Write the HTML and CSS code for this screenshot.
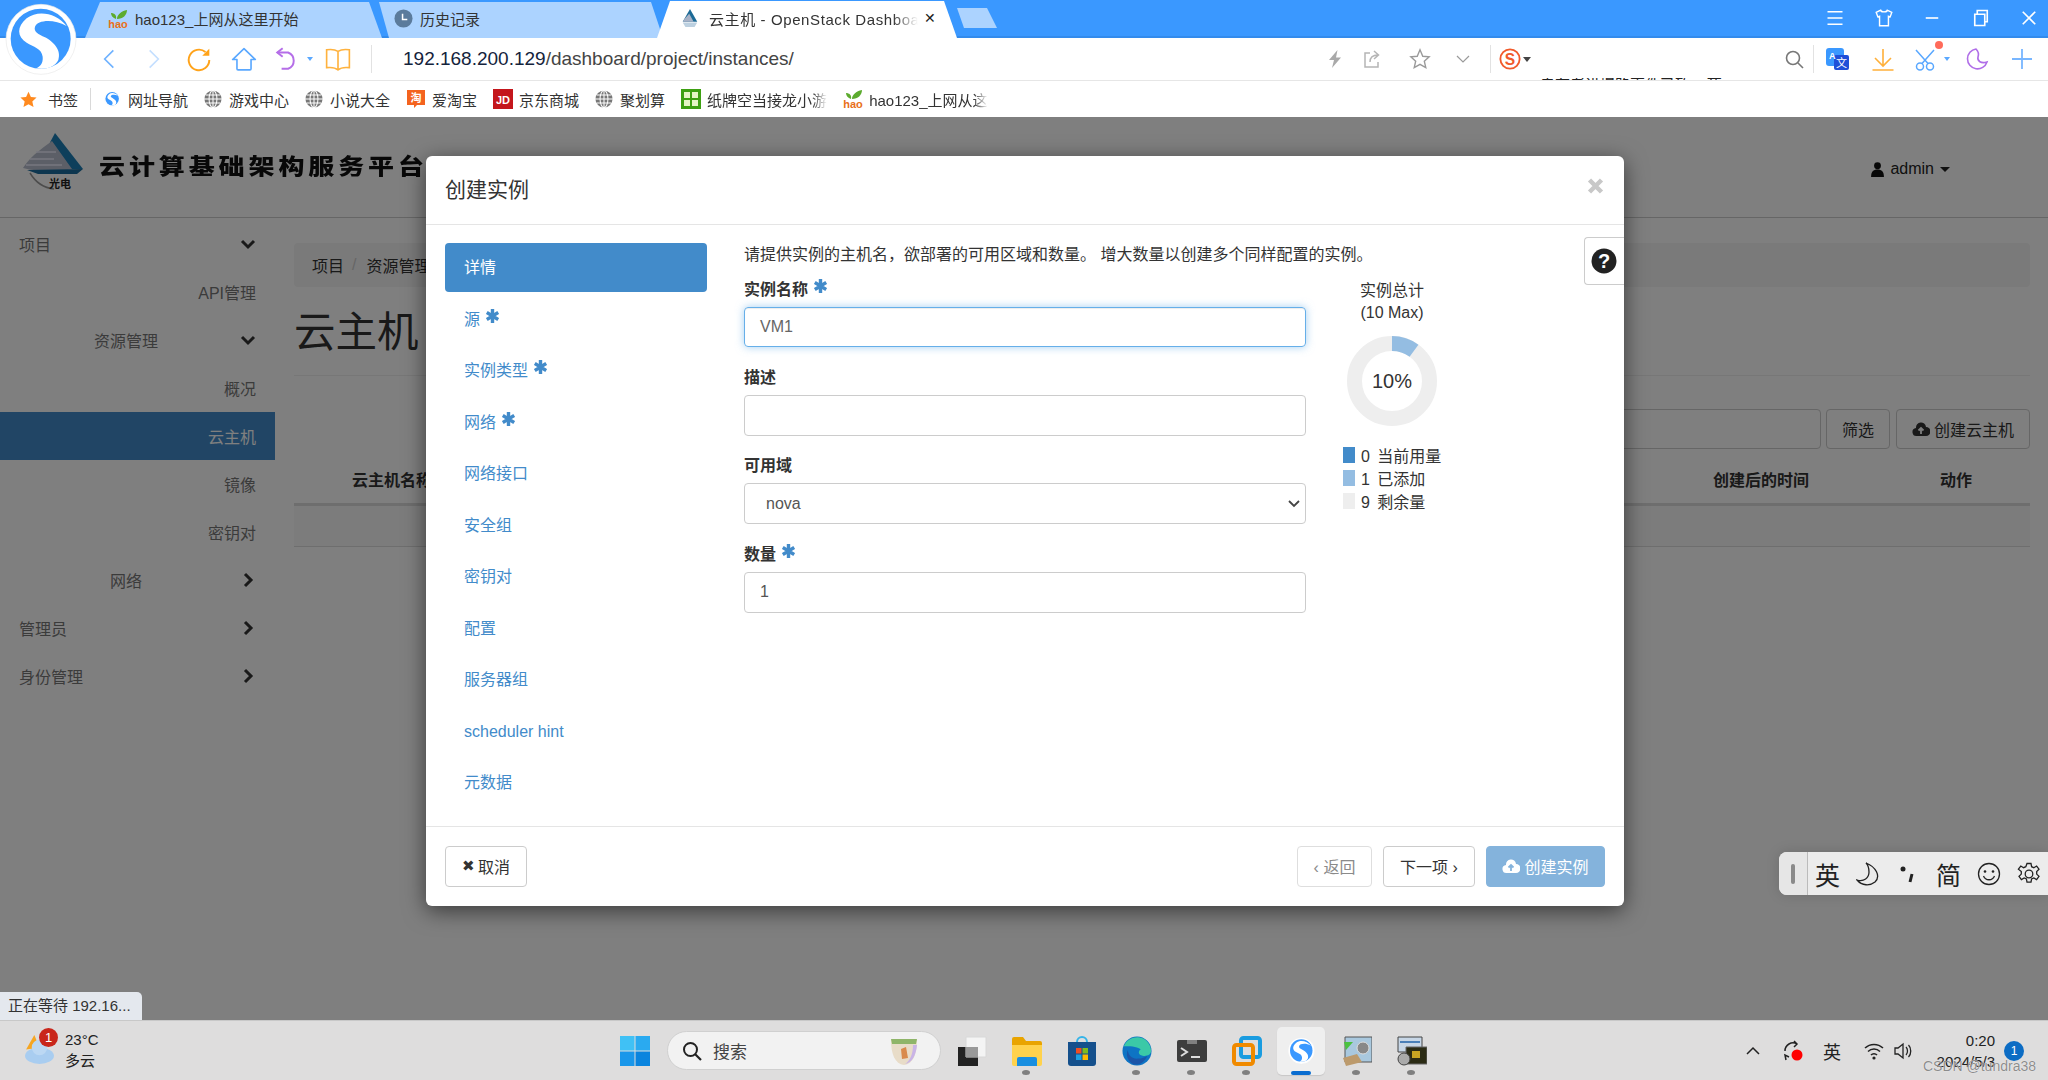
FILE: index.html
```html
<!DOCTYPE html>
<html lang="zh-CN">
<head>
<meta charset="utf-8">
<title>云主机 - OpenStack Dashboard</title>
<link rel="stylesheet" href="styles.css">
</head>
<body>
<svg class="defs" viewBox="0 0 16 16">
  <defs>
    <symbol id="globe" viewBox="0 0 16 16"><circle cx="8" cy="8" r="7.6" fill="#777"/><path d="M0 8h16M1.5 4.5h13M1.5 11.5h13M8 0v16" stroke="#fff" stroke-width=".9"/><ellipse cx="8" cy="8" rx="3.5" ry="7.6" fill="none" stroke="#fff" stroke-width=".9"/></symbol>
    <symbol id="s-logo" viewBox="0 0 240 240"><circle cx="123" cy="118" r="105" fill="#fff" stroke="#e9e9e9" stroke-width="2"/><circle cx="122" cy="116" r="90" fill="#3a98ff"/><path d="M200 78C170 40 115 28 80 55 50 80 50 110 80 128c20 12 45 17 48 42 2 20-8 30-20 35 32 5 57-5 67-25 10-30-15-55-40-68-20-10-35-17-30-32 7-20 55-25 95-2z" fill="#fff"/></symbol>
    <symbol id="hao" viewBox="0 0 20 18"><path d="M8 9C5 8 3 6 3 3 6 3 9 5 8 9zM9 9c0-4 4-8 10-9 0 5-4 9-10 9z" fill="#5cab2e"/><text x="10" y="17.500" class="hao">hao</text></symbol>
    <symbol id="asterisk" viewBox="0 0 13 14"><path d="M6.500 0v14M.8 3.500l11.400 7M12.200 3.500L.8 10.500" stroke="#428bca" stroke-width="3.400"/></symbol>
    <symbol id="cloud" viewBox="0 0 18 16"><path d="M5 15a4 4 0 0 1-1-8 5 5 0 0 1 10-1 4.500 4.500 0 0 1 0 9z" fill="currentColor"/></symbol>
  </defs>
</svg>
<div class="screen">
  <header class="tabbar">
    <div class="tab tab-a"><svg class="fav"><use href="#hao"/></svg><span>hao123_上网从这里开始</span></div>
    <div class="tab tab-b"><svg class="fav" viewBox="0 0 20 20"><circle cx="10" cy="10" r="9.500" fill="#5b7b9c"/><path d="M9 5v6h5" stroke="#fff" stroke-width="1.600" fill="none"/></svg><span>历史记录</span></div>
    <div class="tab tab-c"><svg class="fav" viewBox="0 0 22 22"><path d="M11 1l8 14H3z" fill="#1c6a96"/><path d="M3 15c4-6 6-7 7-9l5 9z" fill="#a8b2c6"/><path d="M3 16h16l-3 5H6z" fill="#bcd0e0"/></svg><span class="tab-title">云主机 - OpenStack Dashboard</span><span class="tab-x">✕</span></div>
    <div class="tab-new"></div>
    <div class="winbtns">
      <svg viewBox="0 0 16 16"><path d="M2 3h12M2 8h12M2 13h12" stroke="#fff" stroke-width="1.300"/></svg>
      <svg viewBox="0 0 18 18"><path d="M6 2L2 4l1.500 4L5 7.500V16h8V7.500l1.500.5L16 4l-4-2c-.5 2-5.500 2-6 0z" fill="none" stroke="#fff" stroke-width="1.300"/></svg>
      <svg viewBox="0 0 16 16"><path d="M3 8h10" stroke="#fff" stroke-width="1.300"/></svg>
      <svg viewBox="0 0 16 16"><path d="M3 5h8v9H3zM5 5V2h8v9h-2" fill="none" stroke="#fff" stroke-width="1.300"/></svg>
      <svg viewBox="0 0 16 16"><path d="M3 3l10 10M13 3L3 13" stroke="#fff" stroke-width="1.300"/></svg>
    </div>
  </header>

  <div class="logo-s"><svg><use href="#s-logo"/></svg></div>

  <nav class="toolbar">
    <div class="tool-left">
      <svg class="ic" viewBox="0 0 24 24"><path d="M16 4L8 12l8 8" fill="none" stroke="#6fb2ff" stroke-width="1.500"/></svg>
      <svg class="ic" viewBox="0 0 24 24"><path d="M8 4l8 8-8 8" fill="none" stroke="#c4dfff" stroke-width="1.500"/></svg>
      <svg class="ic" viewBox="0 0 24 24"><path d="M18 5.500A9.500 9.500 0 1 0 21.500 13" fill="none" stroke="#ffa31a" stroke-width="1.800"/><path d="M21.500 2.500v6.500H15z" fill="#ffa31a"/></svg>
      <svg class="ic" viewBox="0 0 24 24"><path d="M12 2.500L1.500 12.500H5.500V21a1 1 0 0 0 1 1h11a1 1 0 0 0 1-1v-8.500h4z" fill="none" stroke="#5aa8ff" stroke-width="1.500" stroke-linejoin="round"/></svg>
      <svg class="ic undo" viewBox="0 0 24 24"><path d="M8 2L3 6l5 4" fill="none" stroke="#b56ee8" stroke-width="1.800"/><path d="M3 6h10a8 8 0 0 1 0 15H7" fill="none" stroke="#b56ee8" stroke-width="1.800"/></svg>
      <i class="drop drop-blue"></i>
      <svg class="ic book" viewBox="0 0 24 24"><path d="M12 5C9 3 5 3 1.500 3.500V20c4-.5 7.500-.5 10.500 2 3-2.500 6.500-2.500 10.500-2V3.500C19 3 15 3 12 5zm0 0v17" fill="none" stroke="#ffb23e" stroke-width="1.500"/></svg>
    </div>
    <div class="address"><span class="host">192.168.200.129</span><span class="path">/dashboard/project/instances/</span></div>
    <div class="tool-mid">
      <svg class="m-bolt" viewBox="0 0 20 20"><path d="M12.500 1L4 11h5l-2 8 9-10.500h-5z" fill="#a9a9a9"/></svg>
      <svg class="m-share" viewBox="0 0 20 20"><path d="M8 4H3v14h13v-5M8 13c0-5 3-7 8-7M12 2l4.500 4L12 10" fill="none" stroke="#b5b5b5" stroke-width="1.500"/></svg>
      <svg class="m-star" viewBox="0 0 24 24"><path d="M12 2l3 7 7 .6-5.300 4.800 1.600 7.100L12 17.800 5.700 21.500l1.600-7.100L2 9.600 9 9z" fill="none" stroke="#9a9a9a" stroke-width="1.500"/></svg>
      <svg class="m-chev" viewBox="0 0 16 16"><path d="M2 5l6 6 6-6" fill="none" stroke="#9a9a9a" stroke-width="1.200"/></svg>
      <i class="vsep m-sep"></i>
      <svg class="m-s" viewBox="0 0 24 24"><circle cx="12" cy="12" r="10.500" fill="none" stroke="#f15a2b" stroke-width="2"/><text x="12" y="18" class="s-mark">S</text></svg>
      <i class="drop drop-dark"></i>
    </div>
    <div class="news"><span>幸存者讲爆路事件已致48死</span></div>
    <div class="tool-right">
      <svg class="r-search" viewBox="0 0 22 22"><circle cx="10" cy="10" r="6.500" fill="none" stroke="#777" stroke-width="1.600"/><path d="M15 15l5 5" stroke="#777" stroke-width="1.600"/></svg>
      <i class="vsep r-sep"></i>
      <svg class="r-trans" viewBox="0 0 24 22"><rect x="1" y="0" width="18" height="18" rx="3" fill="#3a98ff"/><rect x="9" y="7" width="15" height="15" rx="2" fill="#1f4fd8"/><text x="4" y="11" class="t-a">A</text><text x="11" y="19" class="t-x">文</text></svg>
      <svg class="r-dl" viewBox="0 0 24 24"><path d="M12 2v17M4 11l8 8 8-8M1.500 23h21" fill="none" stroke="#ffb03a" stroke-width="1.600"/></svg>
      <div class="scissor">
        <svg class="r-sc" viewBox="0 0 24 24"><circle cx="7" cy="19.500" r="3.500" fill="none" stroke="#5aa8ff" stroke-width="1.500"/><circle cx="17" cy="19.500" r="3.500" fill="none" stroke="#5aa8ff" stroke-width="1.500"/><path d="M9 16.500L21 3M15 16.500L3 3" stroke="#5aa8ff" stroke-width="1.500"/></svg>
        <b class="reddot"></b>
      </div>
      <i class="drop drop-blue r-drop"></i>
      <svg class="r-moon" viewBox="0 0 24 24"><path d="M11 2a10 10 0 1 0 11 13c-6 2-10-1-9-5 1-3 0-6-2-8z" fill="none" stroke="#b06ee8" stroke-width="1.600"/></svg>
      <svg class="r-plus" viewBox="0 0 24 24"><path d="M12 2v20M2 12h20" stroke="#78b6ff" stroke-width="1.800"/></svg>
    </div>
  </nav>

  <div class="bookmarks">
    <svg class="bm-star" viewBox="0 0 24 24"><path d="M12 1l3.400 7.400 8 .9-6 5.400 1.700 8L12 18.700 4.900 22.700l1.700-8-6-5.400 8-.9z" fill="#ff8a1f"/></svg>
    <span class="bm-label">书签</span>
    <i class="bm-sep"></i>
    <span class="bm"><svg><use href="#s-logo"/></svg>网址导航</span>
    <span class="bm"><svg><use href="#globe"/></svg>游戏中心</span>
    <span class="bm"><svg><use href="#globe"/></svg>小说大全</span>
    <span class="bm"><svg class="sq" viewBox="0 0 20 20"><path d="M1 1h18v15h-8l-3 3v-3H1z" fill="#f4631e"/><text x="10" y="13" class="bm-ic">淘</text></svg>爱淘宝</span>
    <span class="bm"><svg class="sq" viewBox="0 0 20 20"><path d="M0 0h20v20H0z" fill="#c4161c"/><text x="10" y="15" class="bm-ic">JD</text></svg>京东商城</span>
    <span class="bm"><svg><use href="#globe"/></svg>聚划算</span>
    <span class="bm"><svg class="sq" viewBox="0 0 20 20"><path d="M0 0h20v20H0z" fill="#3da012"/><path d="M3 3h6v6H3zM11 3h6v6h-6zM3 11h6v6H3zM11 11h6v6h-6z" fill="#e4f5c4"/></svg><span class="fade">纸牌空当接龙小游</span></span>
    <span class="bm"><svg class="sq"><use href="#hao"/></svg><span class="fade">hao123_上网从这</span></span>
  </div>

  <main class="page">
    <div class="top-header">
      <div class="brand">
        <svg class="brand-logo" viewBox="0 0 62 58"><path d="M33 1l28 36H14z" fill="#1c7fb6"/><path d="M1 36C10 22 24 14 30 9l20 28C36 40 16 40 1 36z" fill="#b9bfcf"/><path d="M8 27h24M14 20h20M4 33h36" stroke="#eef" stroke-width="1.500"/><path d="M5 38l56-1-6 5H16z" fill="#1a6d9e"/><path d="M8 41c6 10 14 15 24 16" fill="none" stroke="#999" stroke-width="1.500"/><text x="27" y="56" class="brand-sm">光电</text></svg>
        <span class="brand-name">云计算基础架构服务平台</span>
      </div>
      <div class="user"><svg class="user-ic" viewBox="0 0 12 14"><circle cx="6" cy="3.500" r="3.200"/><path d="M0 14c0-5 2-7 6-7s6 2 6 7z"/></svg>admin<i class="caret"></i></div>
    </div>
    <div class="body-row">
      <aside class="sidebar">
        <div class="s-item lv0"><span>项目</span><svg class="chev" viewBox="0 0 16 16"><path d="M2 5l6 6 6-6" fill="none" stroke="currentColor" stroke-width="3"/></svg></div>
        <div class="s-item leaf">API管理</div>
        <div class="s-item lv1"><span>资源管理</span><svg class="chev" viewBox="0 0 16 16"><path d="M2 5l6 6 6-6" fill="none" stroke="currentColor" stroke-width="3"/></svg></div>
        <div class="s-item leaf">概况</div>
        <div class="s-item leaf active">云主机</div>
        <div class="s-item leaf">镜像</div>
        <div class="s-item leaf">密钥对</div>
        <div class="s-item lv1b"><span>网络</span><svg class="chev" viewBox="0 0 16 16"><path d="M5 2l6 6-6 6" fill="none" stroke="currentColor" stroke-width="3"/></svg></div>
        <div class="s-item lv0"><span>管理员</span><svg class="chev" viewBox="0 0 16 16"><path d="M5 2l6 6-6 6" fill="none" stroke="currentColor" stroke-width="3"/></svg></div>
        <div class="s-item lv0"><span>身份管理</span><svg class="chev" viewBox="0 0 16 16"><path d="M5 2l6 6-6 6" fill="none" stroke="currentColor" stroke-width="3"/></svg></div>
      </aside>
      <section class="content">
        <div class="crumb">项目<span class="crumb-sep">/</span>资源管理</div>
        <h1 class="h1">云主机</h1>
        <div class="filter-row">
          <div class="filter-input"></div>
          <div class="btn-bg">筛选</div>
          <div class="btn-bg"><svg class="cloud"><use href="#cloud"/><path d="M9 13V7M6.500 9.500L9 7l2.500 2.500" stroke="#fff" stroke-width="1.800" fill="none"/></svg>创建云主机</div>
        </div>
        <div class="thead">
          <span class="th th-name">云主机名称</span>
          <span class="th th-time">创建后的时间</span>
          <span class="th th-act">动作</span>
        </div>
        <div class="trow"></div>
      </section>
    </div>

    <div class="backdrop"></div>

    <div class="modal">
      <div class="modal-head"><span class="modal-title">创建实例</span><svg class="modal-x" viewBox="0 0 17 16"><path d="M2.500 2l12 12M14.500 2l-12 12" stroke="#c8c8c8" stroke-width="4.500"/></svg></div>
      <div class="modal-body">
        <ul class="steps">
          <li class="step on">详情</li>
          <li class="step">源<svg class="req"><use href="#asterisk"/></svg></li>
          <li class="step">实例类型<svg class="req"><use href="#asterisk"/></svg></li>
          <li class="step">网络<svg class="req"><use href="#asterisk"/></svg></li>
          <li class="step">网络接口</li>
          <li class="step">安全组</li>
          <li class="step">密钥对</li>
          <li class="step">配置</li>
          <li class="step">服务器组</li>
          <li class="step">scheduler hint</li>
          <li class="step">元数据</li>
        </ul>
        <div class="pane">
          <p class="hint">请提供实例的主机名，欲部署的可用区域和数量。 增大数量以创建多个同样配置的实例。</p>
          <div class="pane-row">
            <form class="fields">
              <div class="field"><label class="lbl">实例名称<svg class="req"><use href="#asterisk"/></svg></label><div class="inp focus">VM1</div></div>
              <div class="field"><label class="lbl">描述</label><div class="inp"></div></div>
              <div class="field"><label class="lbl">可用域</label><div class="inp sel">nova<svg class="sel-ar" viewBox="0 0 12 8"><path d="M1 1l5 5 5-5" fill="none" stroke="#444" stroke-width="1.800"/></svg></div></div>
              <div class="field"><label class="lbl">数量<svg class="req"><use href="#asterisk"/></svg></label><div class="inp">1</div></div>
            </form>
            <div class="quota">
              <div class="q-title">实例总计<br>(10 Max)</div>
              <div class="donut"><svg viewBox="0 0 90 90"><circle cx="45" cy="45" r="37.500" fill="none" stroke="#eee" stroke-width="15"/><path d="M45 7.500A37.500 37.500 0 0 1 67 14.700" fill="none" stroke="#94bde2" stroke-width="15"/></svg><span class="pct">10%</span></div>
              <ul class="legend">
                <li><i class="sw sw1"></i>0 当前用量</li>
                <li><i class="sw sw2"></i>1 已添加</li>
                <li><i class="sw sw3"></i>9 剩余量</li>
              </ul>
            </div>
          </div>
        </div>
        <div class="help"><svg viewBox="0 0 26 26"><circle cx="13" cy="13" r="12.500" fill="#222"/><text x="13" y="20" class="help-q">?</text></svg></div>
      </div>
      <div class="modal-foot">
        <button class="mbtn cancel"><span class="xm">✖</span>取消</button>
        <div class="foot-right">
          <button class="mbtn back">‹ 返回</button>
          <button class="mbtn next">下一项 ›</button>
          <button class="mbtn go"><svg class="cloud"><use href="#cloud"/><path d="M9 13V7M6.500 9.500L9 7l2.500 2.500" stroke="#84b3dc" stroke-width="1.800" fill="none"/></svg>创建实例</button>
        </div>
      </div>
    </div>

    <div class="ime">
      <span class="ime-grip"><i></i></span>
      <span class="ime-t">英</span>
      <svg viewBox="0 0 24 24"><path d="M10 1C20 5 25 14 19 20 14 24 6 24 1 18c7 2 12-2 12-8 0-4-1-7-3-9z" fill="none" stroke="#222" stroke-width="1.300"/></svg>
      <svg viewBox="0 0 24 24"><circle cx="7" cy="7" r="2.500" fill="#222"/><path d="M16 12l-2 8" stroke="#222" stroke-width="3"/></svg>
      <span class="ime-t">简</span>
      <svg viewBox="0 0 24 24"><circle cx="12" cy="12" r="10.500" fill="none" stroke="#222" stroke-width="1.300"/><circle cx="8" cy="9.500" r="1.300" fill="#222"/><circle cx="16" cy="9.500" r="1.300" fill="#222"/><path d="M6.500 14c2 5 9 5 11 0" fill="none" stroke="#222" stroke-width="1.300"/></svg>
      <svg viewBox="0 0 24 24"><circle cx="12" cy="12" r="3.800" fill="none" stroke="#222" stroke-width="1.300"/><path d="M10 1.500h4l.6 3.200 2.200 1 2.800-1.700 2.400 3.200-2.300 2.300v2.600l2.300 2.300-2.400 3.200-2.800-1.700-2.200 1-.6 3.300h-4l-.6-3.300-2.200-1-2.800 1.700-2.400-3.200 2.300-2.300v-2.600L1.400 7.200l2.400-3.200 2.800 1.700 2.200-1z" fill="none" stroke="#222" stroke-width="1.300"/></svg>
    </div>
    <div class="status">正在等待 192.16...</div>
  </main>

  <footer class="taskbar">
    <div class="weather">
      <svg class="w-ic" viewBox="0 0 30 30"><path d="M2 16l8-14 5 12z" fill="#f5a623"/><ellipse cx="15" cy="22" rx="14" ry="8" fill="#a9cdf0"/><circle cx="15" cy="14" r="7.500" fill="#bcd8f3"/></svg>
      <b class="w-badge">1</b>
      <div class="w-text"><span>23°C</span><span>多云</span></div>
    </div>
    <div class="dock">
      <svg class="tb" viewBox="0 0 30 30"><path d="M0 0h14.500v14.500H0z" fill="#40c1f5"/><path d="M15.500 0H30v14.500H15.500z" fill="#2aaaf0"/><path d="M0 15.500h14.500V30H0z" fill="#1a97ea"/><path d="M15.500 15.500H30V30H15.500z" fill="#0a84de"/></svg>
      <div class="searchbox"><svg viewBox="0 0 20 20"><circle cx="8.500" cy="8.500" r="6.500" fill="none" stroke="#222" stroke-width="2"/><path d="M13 13l6 6" stroke="#222" stroke-width="2.200"/></svg><span>搜索</span><svg class="cup" viewBox="0 0 30 28"><path d="M2 3h26c0 14-4 24-13 25C6 27 2 17 2 3z" fill="#e8dcc8"/><path d="M2 2h26l-1 5H3z" fill="#8fb569"/><path d="M12 12l5-2 2 11-6 1z" fill="#d98a4c"/><path d="M24 8c0 9-3 16-8 19 7-1 11-9 12-19z" fill="#c9b4e6"/></svg></div>
      <div class="app"><svg class="tb" viewBox="0 0 30 30"><path d="M1 11h20v19H1z" fill="#222"/><path d="M9 1h20v20H9z" fill="#f4f4f4" stroke="#d8d8d8"/><path d="M9 11h12v10H9z" fill="#999"/></svg></div>
      <div class="app"><svg class="tb" viewBox="0 0 30 30"><path d="M0 3a2 2 0 0 1 2-2h9l3 4h14a2 2 0 0 1 2 2v21H0z" fill="#e9a400"/><path d="M0 9h30v19a2 2 0 0 1-2 2H2a2 2 0 0 1-2-2z" fill="#ffd24c"/><path d="M5 23a2 2 0 0 1 2-2h16a2 2 0 0 1 2 2v7H5z" fill="#1a8fe0"/></svg><i class="dot"></i></div>
      <div class="app"><svg class="tb" viewBox="0 0 30 30"><path d="M10 6a5 5 0 0 1 10 0" fill="none" stroke="#35b4e8" stroke-width="2"/><path d="M1 6h28v21a3 3 0 0 1-3 3H4a3 3 0 0 1-3-3z" fill="#15508c"/><path d="M9 12h5.500v5.500H9z" fill="#ef4e23"/><path d="M15.500 12H21v5.500h-5.500z" fill="#7fbb1f"/><path d="M9 18.500h5.500V24H9z" fill="#1ba1e2"/><path d="M15.500 18.500H21V24h-5.500z" fill="#ffb900"/></svg></div>
      <div class="app"><svg class="tb" viewBox="0 0 32 32"><circle cx="16" cy="16" r="15.500" fill="#0e74c4"/><path d="M2 11C5 3 14 0 21 2c6 2 10 8 10 14 0 4-5 6-9 5-5-1-5-5-2-7-5-3-12-3-18-3z" fill="#3bc9a7"/><path d="M12 30c-6-3-8-9-6-15 1 6 5 10 12 9 3 0 6-1 9-3-3 7-9 11-15 9z" fill="#1b55a8"/></svg><i class="dot"></i></div>
      <div class="app"><svg class="tb term" viewBox="0 0 30 22"><path d="M0 2a2 2 0 0 1 2-2h26a2 2 0 0 1 2 2v18a2 2 0 0 1-2 2H2a2 2 0 0 1-2-2z" fill="#3d3d3d"/><path d="M10 0h10v4H10z" fill="#808080"/><path d="M4 8l6 4-6 4" fill="none" stroke="#ddd" stroke-width="2"/><path d="M14 17h9" stroke="#ddd" stroke-width="2"/></svg><i class="dot"></i></div>
      <div class="app"><svg class="tb" viewBox="0 0 30 30"><rect x="9" y="2" width="19" height="19" rx="2.500" fill="none" stroke="#1a9ce0" stroke-width="4"/><rect x="2" y="9" width="19" height="19" rx="2.500" fill="none" stroke="#f08a00" stroke-width="4"/></svg><i class="dot"></i></div>
      <div class="app running"><svg class="tb"><use href="#s-logo"/></svg><i class="bar"></i></div>
      <div class="app"><svg class="tb" viewBox="0 0 30 30"><path d="M3 1h27v25H3z" fill="#a9c8de" stroke="#555"/><circle cx="21" cy="12" r="6" fill="#888" stroke="#ddd"/><path d="M2 6l9 0-7 8z" fill="#4cc13f"/><path d="M1 22l14-4 5 8-16 4z" fill="#bc9a6c"/></svg><i class="dot"></i></div>
      <div class="app"><svg class="tb" viewBox="0 0 30 30"><path d="M1 1h24v15H1z" fill="#c7d6e6" stroke="#444"/><path d="M3 5h20v2H3z" fill="#4a7fb8"/><path d="M9 11h21v17H9z" fill="#2b2b14" stroke="#666"/><path d="M15 15h8v7h-8z" fill="#c8a422"/><circle cx="7" cy="23" r="6" fill="#aaa" stroke="#444"/></svg><i class="dot"></i></div>
    </div>
    <div class="tray">
      <svg class="tr t-up" viewBox="0 0 16 16"><path d="M2 11l6-6 6 6" fill="none" stroke="#222" stroke-width="1.500"/></svg>
      <svg class="tr t-sync" viewBox="0 0 20 22"><path d="M2 11a8 8 0 0 1 12-7M11 1l3 3-3 3M3 20l-1-5 4 2" fill="none" stroke="#222" stroke-width="1.500"/><circle cx="14" cy="15" r="5.500" fill="#f00"/></svg>
      <span class="tr-t">英</span>
      <svg class="tr t-wifi" viewBox="0 0 20 18"><path d="M1 6a13 13 0 0 1 18 0M4 9.500a8.500 8.500 0 0 1 12 0M7 13a4 4 0 0 1 6 0" fill="none" stroke="#222" stroke-width="1.500"/><circle cx="10" cy="16" r="1.600" fill="#222"/></svg>
      <svg class="tr t-vol" viewBox="0 0 20 20"><path d="M2 7h3l5-4v14l-5-4H2z" fill="none" stroke="#222" stroke-width="1.300"/><path d="M13 6c2 2 2 6 0 8M15.500 4c3 3 3 9 0 12" fill="none" stroke="#222" stroke-width="1.300"/></svg>
      <div class="clock"><span>0:20</span><span>2024/5/3</span></div>
      <b class="n-badge">1</b>
    </div>
    <span class="watermark">CSDN @tundra38</span>
  </footer>
</div>
</body>
</html>
```
FILE: styles.css
```css
* { box-sizing: border-box; }
html, body { margin: 0; padding: 0; }
body { font-family: "Liberation Sans", "Noto Sans CJK SC", sans-serif; font-size: 16px; color: #333; }
.screen { position: relative; width: 2048px; height: 1080px; overflow: hidden; display: flex; flex-direction: column; background: #fff; }
.defs { position: absolute; width: 0; height: 0; }

.tabbar { height: 38px; background: #3a98ff; border-bottom: 2px solid #338bec; display: flex; align-items: flex-end; padding-left: 85px; flex: none; }
.tab { height: 36px; margin-bottom: -2px; padding-bottom: 3px; display: flex; align-items: center; color: #333; font-size: 15px; position: relative; flex: none; white-space: nowrap; }
.tab-a { width: 297px; background: #acd3ff; clip-path: polygon(15px 0, 284px 0, 297px 100%, 0 100%); padding-left: 23px; }
.tab-b { width: 284px; margin-left: -3px; background: #acd3ff; clip-path: polygon(0 0, 272px 0, 284px 100%, 10px 100%); padding-left: 15px; }
.tab-c { width: 300px; height: 37px; margin-left: -6px; background: #fff; clip-path: polygon(13px 0, 287px 0, 300px 100%, 0 100%); padding-left: 23px; }
.fav { width: 20px; height: 20px; margin-right: 7px; flex: none; }
.tab-b .fav { width: 19px; height: 19px; margin-right: 7px; }
.tab-c .fav { margin-right: 9px; }
.hao { font: bold 11px "Liberation Sans", sans-serif; fill: #e8701a; text-anchor: middle; }
.tab-title { width: 209px; overflow: hidden; letter-spacing: .6px; -webkit-mask-image: linear-gradient(to right, #000 88%, transparent); mask-image: linear-gradient(to right, #000 88%, transparent); }
.tab-x { margin-left: 6px; font-size: 14px; color: #222; }
.tab-new { width: 40px; height: 20px; margin: 0 0 8px 0; background: #acd3ff; clip-path: polygon(0 0, 30px 0, 40px 100%, 7px 100%); }
.winbtns { margin-left: auto; align-self: center; display: flex; gap: 28.500px; padding-right: 9px; }
.winbtns svg { width: 20px; height: 20px; }

.logo-s { position: absolute; left: 0; top: 0; width: 80px; height: 80px; z-index: 3; }
.logo-s svg { width: 100%; height: 100%; display: block; }

.toolbar { position: relative; height: 42px; background: #fff; display: flex; align-items: center; flex: none; padding-left: 96px; }
.ic { width: 26px; height: 26px; flex: none; display: block; }
.tool-left { display: flex; align-items: center; gap: 19px; width: 276px; border-right: 1px solid #e2e2e2; height: 28px; flex: none; }
.tool-left .undo { margin-left: -2px; margin-right: -12px; }
.tool-left .book { margin-left: -7px; }
.drop { width: 0; height: 0; border: 3px solid transparent; border-top: 4px solid #5aa8ff; border-bottom: 0; flex: none; display: block; }
.drop-dark { border: 4px solid transparent; border-top: 5px solid #444; border-bottom: 0; margin-left: 2px; }
.address { margin-left: 31px; font-size: 19px; white-space: nowrap; width: 922px; flex: none; color: #555; }
.host { color: #14233c; }
.path { color: #444; }
.tool-mid { display: flex; align-items: center; flex: none; }
.m-bolt { width: 20px; height: 20px; }
.m-share { width: 20px; height: 20px; margin-left: 17px; }
.m-star { width: 22px; height: 22px; margin-left: 27px; }
.m-chev { width: 16px; height: 16px; margin-left: 24px; }
.m-sep { margin-left: 19px; }
.m-s { width: 22px; height: 22px; margin-left: 8px; }
.vsep { width: 1px; height: 28px; background: #e2e2e2; display: block; flex: none; }
.news { position: absolute; left: 1540px; top: 40px; height: 2px; overflow: hidden; font-size: 15px; color: #222; white-space: nowrap; }
.news span { display: block; line-height: 20px; margin-top: -3px; }
.tool-right { margin-left: auto; display: flex; align-items: center; padding-right: 14px; }
.r-search { width: 22px; height: 22px; }
.r-sep { margin-left: 8px; }
.r-trans { width: 24px; height: 22px; margin-left: 11px; }
.r-dl { width: 24px; height: 24px; margin-left: 22px; }
.scissor { position: relative; margin-left: 18px; height: 24px; }
.r-sc { width: 24px; height: 24px; display: block; }
.r-drop { margin-left: 7px; }
.r-moon { width: 24px; height: 24px; margin-left: 15px; }
.r-plus { width: 24px; height: 24px; margin-left: 21px; }
.reddot { position: absolute; right: -6px; top: -6px; width: 8px; height: 8px; border-radius: 50%; background: #ff6b5a; }
.s-mark { font: bold 17px "Liberation Sans", sans-serif; text-anchor: middle; fill: #f15a2b; }
.t-a { font: bold 9px "Liberation Sans", sans-serif; fill: #fff; }
.t-x { font: 11px "Noto Sans CJK SC", sans-serif; fill: #fff; }

.bookmarks { height: 37px; background: #fff; border-top: 1px solid #e6e6e6; display: flex; align-items: center; padding-left: 20px; font-size: 15px; color: #333; flex: none; white-space: nowrap; }
.bm-star { width: 17px; height: 17px; margin-right: 11px; }
.bm-label { margin-right: 12px; }
.bm { display: flex; align-items: center; margin-right: 16px; }
.bm svg { width: 18px; height: 18px; margin-right: 7px; }
.bm svg.sq { width: 20px; height: 20px; margin-right: 6px; }
.bm-sep { width: 1px; height: 22px; background: #d9d9d9; margin-right: 12px; display: block; }
.bm-ic { font: bold 11px "Liberation Sans", "Noto Sans CJK SC", sans-serif; text-anchor: middle; fill: #fff; }
.fade { -webkit-mask-image: linear-gradient(to right, #000 88%, transparent); mask-image: linear-gradient(to right, #000 88%, transparent); }

.page { position: relative; flex: 1; background: #fff; overflow: hidden; }
.top-header { height: 101px; border-bottom: 1px solid #ccc; display: flex; align-items: flex-start; justify-content: space-between; padding: 14px 98px 0 22px; }
.brand { display: flex; align-items: center; height: 60px; }
.brand-logo { width: 62px; height: 58px; margin-right: 15px; flex: none; }
.brand-sm { font: bold 11px "Liberation Serif", "Noto Sans CJK SC", serif; fill: #222; }
.brand-name { display: inline-block; font: 900 26px "Noto Sans CJK SC", sans-serif; letter-spacing: 3.900px; color: #111; white-space: nowrap; margin-top: 7px; transform: scaleY(.84); }
.user { display: flex; align-items: center; font-size: 16px; color: #222; margin-top: 29px; }
.user-ic { width: 13px; height: 15px; margin-right: 6px; fill: #111; }
.caret { width: 0; height: 0; border: 5px solid transparent; border-top: 5px solid #222; border-bottom: 0; margin-left: 6px; display: block; }
.body-row { display: flex; height: 803px; }
.sidebar { width: 275px; padding-top: 2px; flex: none; font-size: 16px; color: #777; }
.s-item { height: 48px; padding-bottom: 1px; display: flex; align-items: center; position: relative; white-space: nowrap; }
.s-item.leaf { justify-content: flex-end; padding-right: 19px; }
.s-item.active { background: #428bca; color: #fff; }
.lv0 { padding-left: 19px; }
.lv1 span { margin-left: 94px; }
.lv1b span { margin-left: 110px; }
.chev { position: absolute; left: 240px; top: 50%; width: 16px; height: 16px; margin-top: -8px; color: #333; }
.content { width: 1736px; margin-left: 19px; padding-top: 25px; }
.crumb { height: 44px; background: #f5f5f5; border-radius: 4px; padding: 0 18px; display: flex; align-items: center; color: #333; }
.crumb-sep { color: #ccc; margin: 0 10px 0 8px; }
.h1 { margin: 22px 0 0; height: 67px; font-size: 41.500px; line-height: 48px; font-weight: 400; color: #333; border-bottom: 1px solid #eee; padding-bottom: 18px; }
.filter-row { display: flex; justify-content: flex-end; gap: 6px; margin-top: 33px; height: 40px; }
.filter-input { width: 700px; border: 1px solid #ccc; border-radius: 4px; margin-right: -1px; }
.btn-bg { border: 1px solid #ccc; border-radius: 4px; padding: 0 15px; display: flex; align-items: center; color: #333; font-size: 16px; background: #fff; }
.cloud { width: 18px; height: 16px; margin-right: 4px; flex: none; }
.thead { position: relative; height: 57px; border-bottom: 3px solid #ddd; font-weight: 700; }
.th { position: absolute; top: 21px; line-height: 22px; white-space: nowrap; }
.th-name { left: 58px; }
.th-time { left: 1419px; }
.th-act { left: 1646px; }
.trow { height: 41px; background: #f9f9f9; border-bottom: 1px solid #ddd; }

.backdrop { position: absolute; inset: 0; background: rgba(0, 0, 0, .5); }

.modal { position: absolute; left: 426px; top: 39px; width: 1198px; height: 750px; background: #fff; border-radius: 6px; box-shadow: 0 5px 22px rgba(0, 0, 0, .55); display: flex; flex-direction: column; }
.modal-head { height: 69px; border-bottom: 1px solid #e5e5e5; display: flex; align-items: center; justify-content: space-between; padding: 0 20px 4px 19px; flex: none; }
.modal-title { font-size: 21px; color: #333; }
.modal-x { width: 17px; height: 16px; margin-top: -5px; }
.modal-body { position: relative; flex: 1; display: flex; padding: 18px 19px 0; }
.steps { list-style: none; margin: 0; padding: 0; width: 262px; flex: none; }
.step { height: 49px; margin-bottom: 2.500px; padding: 1px 0 0 19px; line-height: 22px; display: flex; align-items: center; color: #428bca; border-radius: 4px; white-space: nowrap; font-size: 16px; }
.step.on { background: #428bca; color: #fff; }
.req { width: 13px; height: 14px; margin-left: 6px; transform: translateY(-4px); flex: none; }
.pane { margin-left: 37px; flex: 1; }
.hint { margin: 1px 0 0; font-size: 16px; line-height: 22px; color: #333; }
.pane-row { display: flex; }
.fields { width: 562px; margin-top: 12px; }
.field { margin-bottom: 18.670px; }
.lbl { display: flex; align-items: center; font-weight: 700; height: 22px; padding-top: 2px; font-size: 16px; line-height: 20px; margin-bottom: 7px; color: #333; }
.lbl .req { transform: translateY(-4px); }
.inp { height: 41px; border: 1px solid #ccc; border-radius: 4px; padding: 0 15px; display: flex; align-items: center; color: #555; font-size: 16px; line-height: 22px; position: relative; }
.inp.focus { height: 40px; margin-bottom: 1px; color: #666; border-color: #66afe9; box-shadow: inset 0 1px 1px rgba(0, 0, 0, .075), 0 0 8px rgba(102, 175, 233, .6); }
.inp.sel { padding-left: 21px; }
.sel-ar { position: absolute; right: 5px; top: 16px; width: 12px; height: 8px; }
.quota { width: 150px; margin-left: 11px; margin-top: 14px; display: flex; flex-direction: column; align-items: center; color: #333; }
.q-title { text-align: center; line-height: 22px; font-size: 16px; }
.donut { position: relative; width: 90px; height: 90px; margin-top: 12px; }
.donut svg { width: 90px; height: 90px; display: block; }
.pct { position: absolute; inset: 0; display: flex; align-items: center; justify-content: center; font-size: 20px; color: #333; }
.legend { list-style: none; padding: 0; margin: 17px 0 0 26px; width: 110px; align-self: flex-start; }
.legend li { height: 23px; display: flex; align-items: center; white-space: pre; font-size: 16px; word-spacing: 3px; }
.sw { width: 12px; height: 16px; margin-right: 6px; display: block; flex: none; }
.sw1 { background: #428bca; }
.sw2 { background: #94bde2; }
.sw3 { background: #eee; }
.help { position: absolute; right: 0; top: 12px; width: 40px; height: 48px; padding-right: 2px; border: 1px solid #ccc; border-right: 0; border-radius: 4px 0 0 4px; display: flex; align-items: center; justify-content: center; }
.help svg { width: 26px; height: 26px; }
.help-q { font: bold 20px "Liberation Sans", sans-serif; text-anchor: middle; fill: #fff; }
.modal-foot { height: 80px; border-top: 1px solid #e5e5e5; display: flex; align-items: center; justify-content: space-between; padding: 0 19px; flex: none; }
.foot-right { display: flex; gap: 11px; }
.mbtn { height: 41px; padding: 0 0 2px; border: 1px solid #ccc; border-radius: 4px; background: #fff; color: #333; font: 16px "Liberation Sans", "Noto Sans CJK SC", sans-serif; display: flex; align-items: center; justify-content: center; }
.xm { font-size: 15px; margin-right: 3px; }
.cancel { width: 82px; }
.back { width: 75px; color: #8a8a8a; border-color: #dedede; }
.next { width: 92px; }
.go { width: 119px; background: #84b3dc; border-color: #84b3dc; color: #fff; }

.ime { position: absolute; left: 1779px; top: 735px; width: 269px; height: 43px; background: #ececec; border-radius: 8px 0 0 8px; box-shadow: 0 0 14px rgba(0, 0, 0, .14); display: flex; align-items: center; gap: 16px; color: #222; }
.ime-grip { width: 29px; height: 43px; border-right: 1px solid #bbb; display: flex; align-items: center; justify-content: center; margin-right: -9px; background: #e6e6e6; border-radius: 8px 0 0 8px; }
.ime-grip i { width: 4px; height: 20px; background: #8a8a8a; border-radius: 2px; display: block; }
.ime-t { font-size: 25px; width: 25px; }
.ime svg { width: 24px; height: 24px; flex: none; }
.status { position: absolute; left: 0; bottom: 0; width: 142px; height: 28px; background: #e4e8ee; border-radius: 0 5px 0 0; padding-left: 8px; font-size: 15px; line-height: 28px; color: #333; white-space: nowrap; }

.taskbar { position: relative; height: 60px; background: #dedddd; border-top: 1px solid #c8c8c8; flex: none; display: flex; align-items: center; }
.weather { position: absolute; left: 24px; top: 8px; display: flex; }
.w-ic { width: 31px; height: 31px; margin-top: 4px; }
.w-badge { position: absolute; left: 15px; top: -1px; width: 19px; height: 19px; border-radius: 50%; background: #c9261b; color: #fff; font-size: 13px; font-weight: 400; display: flex; align-items: center; justify-content: center; }
.w-text { margin-left: 10px; display: flex; flex-direction: column; font-size: 15px; line-height: 21px; color: #222; }
.dock { position: absolute; left: 620px; top: 0; height: 59px; display: flex; align-items: center; }
.tb { width: 30px; height: 30px; display: block; }
.tb.term { height: 22px; }
.searchbox { width: 274px; height: 39px; margin-left: 17px; background: #f2f2f2; border: 1px solid #d0d0d0; border-radius: 20px; display: flex; align-items: center; padding-left: 14px; color: #444; font-size: 17px; margin-right: 3px; }
.searchbox svg { width: 20px; height: 20px; margin-right: 11px; flex: none; }
.searchbox svg.cup { width: 32px; height: 28px; margin: 0 20px 0 auto; }
.app { position: relative; width: 55px; height: 59px; display: flex; align-items: center; justify-content: center; flex: none; }
.dot { position: absolute; left: 23px; bottom: 5px; width: 8px; height: 5px; border-radius: 50%; background: #7f7f7f; display: block; }
.running { background: #efefef; border-radius: 5px; height: 48px; width: 48px; margin-left: 3px; margin-right: 4px; box-shadow: 0 1px 1px rgba(0,0,0,.1); }
.bar { position: absolute; left: 14px; bottom: 0; width: 20px; height: 4px; background: #0a6dd0; border-radius: 2px; display: block; }
.tray { position: absolute; right: 0; top: 0; height: 59px; display: flex; align-items: center; color: #222; padding-right: 24px; }
.tr { display: block; flex: none; }
.t-up { width: 16px; height: 16px; }
.t-sync { width: 20px; height: 22px; margin-left: 22px; }
.tr-t { font-size: 18px; margin-left: 20px; }
.t-wifi { width: 20px; height: 20px; margin-left: 23px; }
.t-vol { width: 20px; height: 20px; margin-left: 9px; }
.clock { display: flex; flex-direction: column; align-items: flex-end; font-size: 15px; line-height: 21px; width: 76px; margin-left: 6px; margin-right: 9px; color: #222; }
.n-badge { width: 20px; height: 20px; border-radius: 50%; background: #0c6cc4; color: #fff; font-size: 12px; font-weight: 400; display: flex; align-items: center; justify-content: center; }
.watermark { position: absolute; right: 12px; bottom: 6px; font-size: 14px; color: rgba(120, 120, 120, .85); text-shadow: 0 0 1px #fff; white-space: nowrap; }
```
